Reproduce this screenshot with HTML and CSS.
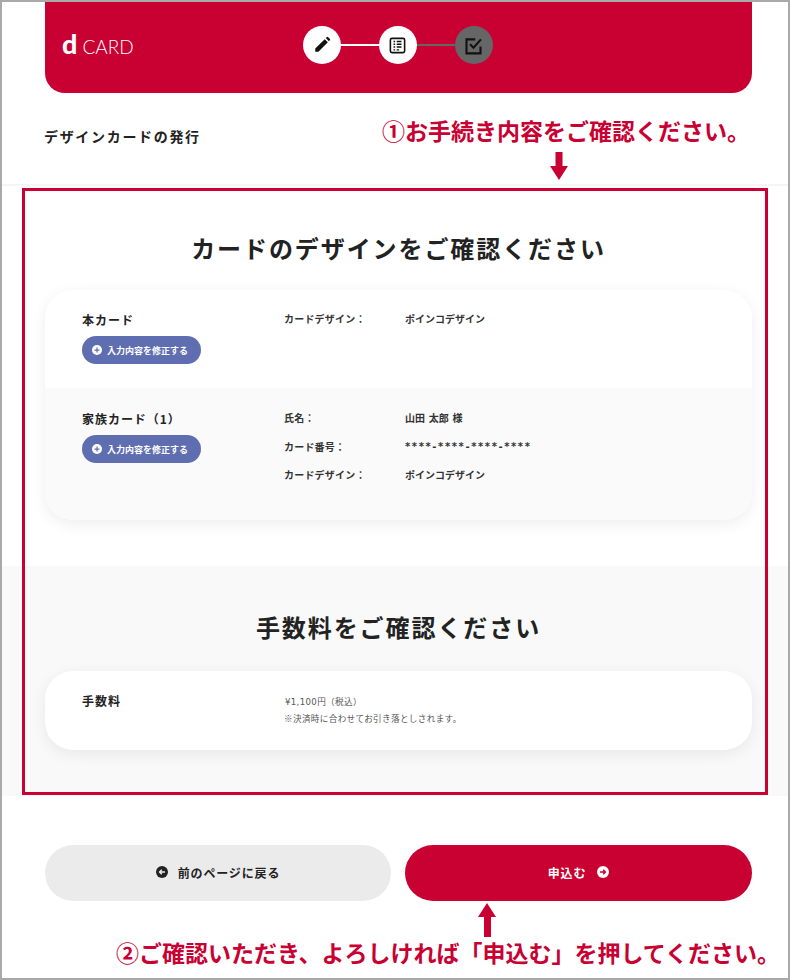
FILE: index.html
```html
<!DOCTYPE html>
<html lang="ja">
<head>
    <meta charset="UTF-8">
    <title>デザインカードの発行</title>
    <link rel="stylesheet" href="styles.css">
</head>
<body>
    <div class="frame">
        <header class="site-header">
            <div class="logo"><span class="logo-d">d</span><span class="logo-card">CARD</span></div>
            <div class="steps">
                <div class="step">
                    <svg viewBox="0 0 24 24" width="18" height="18"><path d="M3 21v-4.2L15.6 4.2l4.2 4.2L7.2 21zM17 2.8l1.2-1.2a1.4 1.4 0 0 1 2 0l2.2 2.2a1.4 1.4 0 0 1 0 2L21.2 7z" fill="#111"/></svg>
                </div>
                <div class="step-line"></div>
                <div class="step">
                    <svg viewBox="0 0 24 24" width="19" height="19"><rect x="3" y="3" width="18" height="18" rx="2" fill="none" stroke="#111" stroke-width="2"/><path d="M7 7.5h2M11 7.5h6M7 11h2M11 11h6M7 14.500h2M11 14.500h6M7 18h2M11 18h3" stroke="#111" stroke-width="1.800" transform="translate(0 -.5)"/></svg>
                </div>
                <div class="step-line step-line-off"></div>
                <div class="step step-off">
                    <svg viewBox="0 0 24 24" width="21" height="21"><path d="M20 13v8H4V5h10" fill="none" stroke="#111" stroke-width="2.400"/><path d="M8 10.500l4 4 8.500-9.500" fill="none" stroke="#111" stroke-width="2.400"/></svg>
                </div>
            </div>
        </header>

        <div class="page-title">デザインカードの発行</div>

        <section class="section">
            <h2>カードのデザインをご確認ください</h2>
            <div class="card">
                <div class="row">
                    <div class="row-head">
                        <h3>本カード</h3>
                        <button class="edit-btn"><svg viewBox="0 0 12 12" width="10" height="10"><circle cx="6" cy="6" r="6" fill="#fff"/><path d="M3 6h6M6 3v6" stroke="#5f6eb0" stroke-width="1.500"/></svg>入力内容を修正する</button>
                    </div>
                    <dl class="info">
                        <dt>カードデザイン：</dt><dd>ポインコデザイン</dd>
                    </dl>
                </div>
                <div class="row row-alt">
                    <div class="row-head">
                        <h3>家族カード（1）</h3>
                        <button class="edit-btn"><svg viewBox="0 0 12 12" width="10" height="10"><circle cx="6" cy="6" r="6" fill="#fff"/><path d="M3 6h6M6 3v6" stroke="#5f6eb0" stroke-width="1.500"/></svg>入力内容を修正する</button>
                    </div>
                    <dl class="info">
                        <dt>氏名：</dt><dd class="name">山田 太郎 様</dd>
                        <dt>カード番号：</dt><dd class="mask">****-****-****-****</dd>
                        <dt>カードデザイン：</dt><dd>ポインコデザイン</dd>
                    </dl>
                </div>
            </div>
        </section>

        <section class="section section-gray">
            <h2>手数料をご確認ください</h2>
            <div class="card">
                <div class="row row-fee">
                    <div class="row-head">
                        <h3>手数料</h3>
                    </div>
                    <div class="fee">
                        <p><span class="amount">¥1,100</span>円（税込）</p>
                        <p>※決済時に合わせてお引き落としされます。</p>
                    </div>
                </div>
            </div>
        </section>

        <div class="actions">
            <button class="action-btn action-back"><svg viewBox="0 0 12 12" width="12" height="12"><circle cx="6" cy="6" r="6" fill="#222"/><path d="M9 6H4M5.800 3.800L3.600 6l2.200 2.200" fill="none" stroke="#ebebeb" stroke-width="1.500"/></svg>前のページに戻る</button>
            <button class="action-btn action-apply">申込む<svg viewBox="0 0 12 12" width="12" height="12"><circle cx="6" cy="6" r="6" fill="#fff"/><path d="M3 6h5M6.200 3.800L8.400 6 6.200 8.200" fill="none" stroke="#c90032" stroke-width="1.500"/></svg></button>
        </div>

        <!-- annotations on top of the screenshot -->
        <div class="note note-1">①お手続き内容をご確認ください。</div>
        <svg class="arrow arrow-down" viewBox="0 0 18 28" width="18" height="28"><path d="M5.500 0h7v14H18L9 28 0 14h5.500z" fill="#c90032"/></svg>
        <div class="note-box"></div>
        <svg class="arrow arrow-up" viewBox="0 0 18 34" width="18" height="34"><path d="M9 0l9 14h-5v20H6V14H0z" fill="#c90032"/></svg>
        <div class="note note-2">②ご確認いただき、よろしければ「申込む」を押してください。</div>
    </div>
</body>
</html>
```

FILE: styles.css
```css
* {
    box-sizing: border-box;
}

body {
    margin: 0;
    font-family: "Noto Sans CJK JP", "Noto Sans", sans-serif;
    color: #222;
    background-color: #fff;
}

.frame {
    position: relative;
    width: 790px;
    height: 980px;
    border: 2px solid #a9a9a9;
    overflow: hidden;
}

.site-header {
    position: relative;
    display: flex;
    align-items: center;
    justify-content: center;
    height: 91px;
    margin: 0 36px 0 43px;
    background-color: #c90032;
    border-radius: 0 0 20px 20px;
}

.logo {
    position: absolute;
    left: 17px;
    top: 26px;
    display: flex;
    align-items: baseline;
    color: #fff;
}

.logo-d {
    font-family: "Lato", sans-serif;
    font-size: 27px;
    font-weight: 900;
    line-height: 32px;
}

.logo-card {
    margin-left: 5px;
    font-family: "Lato", sans-serif;
    font-size: 19px;
    font-weight: 300;
}

.steps {
    display: flex;
    align-items: center;
    margin: -5px 0 0 -2px;
}

.step {
    display: flex;
    align-items: center;
    justify-content: center;
    width: 38px;
    height: 38px;
    border-radius: 50%;
    background-color: #fff;
}

.step-off {
    background-color: #666;
}

.step-line {
    width: 38px;
    height: 2px;
    background-color: #fff;
}

.step-line-off {
    background-color: #666;
}

.page-title {
    height: 93px;
    padding: 31px 0 0 42px;
    font-size: 14px;
    font-weight: 700;
    line-height: 24px;
    letter-spacing: 0.12em;
    border-bottom: 2px solid #f5f5f5;
}

.section {
    height: 380px;
    padding: 44px 0 0 43px;
}

.section-gray {
    height: 230px;
    padding-top: 43px;
    background-color: #f9f9f9;
}

h2 {
    width: 707px;
    margin: 0 0 25px;
    font-size: 24px;
    font-weight: 700;
    line-height: 35px;
    letter-spacing: 0.08em;
    text-align: center;
}

.section-gray h2 {
    margin-bottom: 27px;
}

.card {
    width: 707px;
    border-radius: 28px;
    background-color: #fff;
    box-shadow: 0 4px 16px rgba(0, 0, 0, 0.07);
    overflow: hidden;
}

.row {
    display: flex;
    height: 98px;
    padding: 20px 37px 0;
}

.row-alt {
    height: 132px;
    padding-top: 21px;
    background-color: #fafafa;
}

.row-fee {
    height: 79px;
    padding-top: 20px;
}

.row-head {
    width: 202px;
}

h3 {
    margin: 0 0 6px;
    font-size: 12px;
    font-weight: 700;
    line-height: 20px;
    letter-spacing: 0.08em;
}

.edit-btn {
    display: flex;
    align-items: center;
    gap: 5px;
    width: 119px;
    height: 28px;
    padding: 0 0 0 10px;
    border: none;
    border-radius: 14px;
    font-family: inherit;
    font-size: 9px;
    font-weight: 700;
    color: #fff;
    background-color: #5f6eb0;
}

.info {
    display: grid;
    grid-template-columns: 121px 1fr;
    row-gap: 13.500px;
    align-content: start;
    margin: 1px 0 0;
    font-size: 10px;
    font-weight: 700;
    line-height: 15px;
    color: #333;
}

.info dt {
    letter-spacing: 0.02em;
}

.info dd {
    margin: 0;
}

.name {
    word-spacing: 1.500px;
}

.mask {
    font-family: "DejaVu Sans", sans-serif;
    letter-spacing: 1.600px;
}

.fee {
    margin-top: 3px;
    font-size: 8.600px;
    line-height: 15.500px;
    letter-spacing: 0.04em;
    color: #555;
}

.fee p {
    margin: 0;
}

.amount {
    font-family: "DejaVu Sans", sans-serif;
    margin-left: 1px;
}

.actions {
    display: flex;
    gap: 14px;
    padding: 49px 0 0 43px;
}

.action-btn {
    display: flex;
    align-items: center;
    justify-content: center;
    width: 346px;
    height: 56px;
    padding: 0 0 2px;
    border: none;
    border-radius: 28px;
    font-family: inherit;
    font-size: 12px;
    font-weight: 700;
    letter-spacing: 0.07em;
}

.action-back {
    gap: 10px;
    color: #222;
    background-color: #ebebeb;
}

.action-apply {
    gap: 11px;
    width: 347px;
    color: #fff;
    background-color: #c90032;
}

.note {
    position: absolute;
    font-size: 23px;
    font-weight: 700;
    line-height: 30px;
    color: #c90032;
    white-space: nowrap;
}

.note-1 {
    left: 380px;
    top: 113px;
}

.note-2 {
    left: 114px;
    top: 935px;
}

.note-box {
    position: absolute;
    left: 20px;
    top: 186px;
    width: 746px;
    height: 607px;
    border: 3px solid #c90032;
}

.arrow {
    position: absolute;
}

.arrow-down {
    left: 548px;
    top: 150px;
}

.arrow-up {
    left: 476px;
    top: 901px;
}
```
